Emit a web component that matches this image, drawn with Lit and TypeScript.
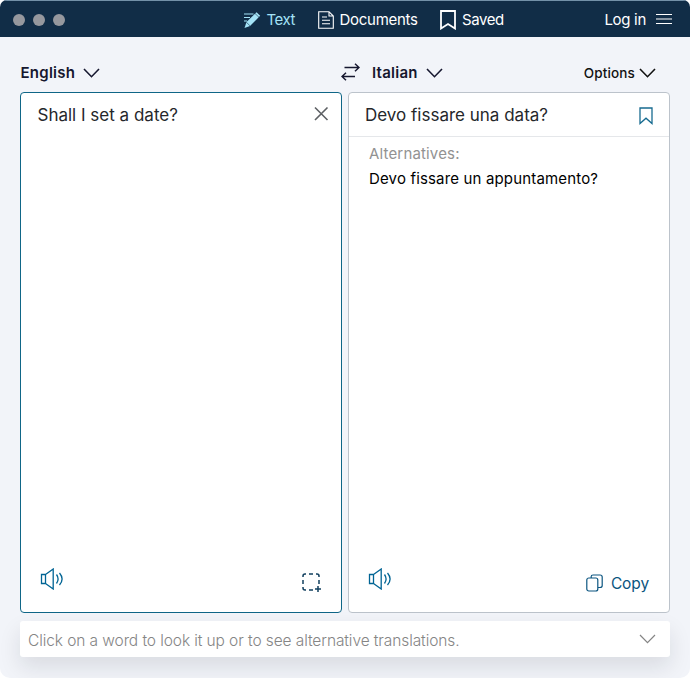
import { LitElement, html, css, svg } from "lit";
import { customElement } from "lit/decorators.js";

const icon = (w: number, h: number, body: unknown, sw = 1.3) => html`<svg
  width=${w} height=${h} viewBox="0 0 ${w} ${h}" fill="none" stroke="currentColor" stroke-width=${sw}>${body}</svg>`;

const chevron = () => icon(17, 10, svg`<path d="M1 1L8.5 8.7L16 1"/>`, 1.6);
const speaker = () => icon(24, 22, svg`<path d="M1.5 6.5H5.5V15.5H1.5ZM5.5 6.5L13.2 1V21L5.5 15.5"/><path d="M16.5 6.5Q19.7 11 16.5 15.5M19.5 5Q24.7 11 19.5 17"/>`, 1.3);

@customElement("app-root")
export class AppRoot extends LitElement {
  static styles = css`
    :host { display: block; font-family: Inter, "Liberation Sans", sans-serif; background: #fff; }
    * { box-sizing: border-box; }
    svg { display: block; flex: none; }
    .window { width: 690px; height: 678px; border-radius: 7px 7px 10px 10px; overflow: hidden; background: #f2f4f9; display: flex; flex-direction: column; }
    .bar { height: 37px; flex: none; background: #112d47; border-top: 1px solid #7391a8; color: #fff; display: flex; align-items: center; padding: 1px 18px 0 13px; font-size: 15px; letter-spacing: -.3px; line-height: 20px; }
    .dots { display: flex; gap: 8px; width: 230px; }
    .dot { width: 12px; height: 12px; border-radius: 50%; background: #96989e; }
    .item { display: flex; align-items: center; white-space: nowrap; }
    .text { color: #a4e3f7; width: 74.6px; gap: 5.6px; letter-spacing: -.5px; }
    .docs { width: 122.4px; gap: 6px; }
    .saved { gap: 6px; letter-spacing: -.4px; }
    .login { margin-left: auto; gap: 10px; }
    .login svg { margin-bottom: 2px; }
    .langs { height: 55px; flex: none; padding: 16px 34px 0 20.5px; display: flex; align-items: center; color: #16172f; font-size: 15px; letter-spacing: .25px; font-weight: 600; }
    .lang { display: flex; align-items: center; gap: 7.5px; }
    .source { width: 320px; }
    .swap { margin-bottom: 2px; }
    .target { margin-left: 12.5px; gap: 8px; }
    .options { margin-left: auto; font-size: 13.5px; font-weight: 500; gap: 4px; color: #111; letter-spacing: .15px; }
    .panes { height: 521px; flex: none; margin: 0 20px; display: grid; grid-template-columns: 322px 322px; gap: 6px; }
    .pane { background: #fff; border: 1px solid #bcc3cb; border-radius: 4px; display: flex; flex-direction: column; color: #006494; }
    .pane.active { border-color: #0f6687; }
    .line { height: 44px; flex: none; display: flex; align-items: center; justify-content: space-between; padding: 0 12px 0 16.5px; font-size: 17px; color: #25272b; white-space: nowrap; }
    .line.result { border-bottom: 1px solid #e5e7ea; padding-right: 16px; padding-left: 16px; }
    .bookmark { color: #176b90; padding-top: 2px; }
    .close { color: #5d6064; padding-bottom: 3px; }
    .alts { padding: 4px 20px; font-size: 15px; letter-spacing: .16px; line-height: 25px; color: #000; }
    .hint { color: #929292; }
    .tools { margin-top: auto; height: 44px; padding: 0 20px 0 19px; display: flex; justify-content: space-between; }
    .scan { margin: 5px -1px 0 0; color: #12405f; }
    .copy { display: flex; align-items: center; gap: 8px; height: 22px; margin-top: 4px; font-size: 15.5px; letter-spacing: -.1px; color: #0b5580; }
    .lookup { margin: 8px 20px 0; height: 36px; flex: none; border-radius: 3px; background: #fff; box-shadow: 0 10px 22px rgba(20, 25, 35, .11); display: flex; align-items: center; justify-content: space-between; padding: 2px 14px 0 8px; font-size: 15.5px; letter-spacing: -.09px; font-weight: 300; color: #858585; }
    .lookup svg { margin-bottom: 2px; }
  `;

  render() {
    return html`<div class="window">
      <header class="bar">
        <div class="dots"><i class="dot"></i><i class="dot"></i><i class="dot"></i></div>
        <div class="item text">${icon(18, 18, svg`<path d="M1 3H10.5M1 6.5H7M1 10H4" stroke-width="1.2"/><path d="M3.5 11L13.5 1.3L17.2 4.8L7 15L1.5 17Z" fill="currentColor" stroke="none"/><path d="M12 2.5L16 6.3M3.3 11.2L7 14.8" stroke="#112d47" stroke-width=".6"/>`)}<span>Text</span></div>
        <div class="item docs">${icon(16, 18, svg`<path d="M.7 .7H11L15.3 5V17.3H.7ZM11 .7V5H15.3M4 6H9M4 9.3H12M4 12.7H12"/>`, 1.1)}<span>Documents</span></div>
        <div class="item saved">${icon(16, 20, svg`<path d="M1 1H15V18.5L8 14L1 18.5Z"/>`, 1.8)}<span>Saved</span></div>
        <div class="item login"><span>Log in</span>${icon(16, 12, svg`<path d="M0 1.5H16M0 6H16M0 10.5H16"/>`, 1.1)}</div>
      </header>
      <div class="langs">
        <div class="lang source"><span>English</span>${chevron()}</div>
        <span class="swap">${icon(19, 18, svg`<path d="M3.5 4.5H18M14 .8L18 4.5L14 8.2M14 13.5H1M5 9.8L1 13.5L5 17.2"/>`, 1.5)}</span>
        <div class="lang target"><span>Italian</span>${chevron()}</div>
        <div class="lang options"><span>Options</span>${chevron()}</div>
      </div>
      <main class="panes">
        <section class="pane active">
          <div class="line"><span>Shall I set a date?</span><span class="close">${icon(16, 16, svg`<path d="M2 1.5L14.5 14M14.5 1.5L2 14"/>`, 1.6)}</span></div>
          <div class="tools">${speaker()}<span class="scan">${icon(20, 20, svg`<path d="M1 4V3Q1 1 3 1H4M7 1H11M14 1H15Q17 1 17 3V4M17 7V11M1 7V11M1 14V15Q1 17 3 17H4M7 17H11M16 13V19M13 16H19"/>`, 1.5)}</span></div>
        </section>
        <section class="pane">
          <div class="line result"><span>Devo fissare una data?</span><span class="bookmark">${icon(14, 18, svg`<path d="M1 1H13V16.5L7 11.2L1 16.5Z"/>`, 1.3)}</span></div>
          <div class="alts"><div class="hint">Alternatives:</div><div>Devo fissare un appuntamento?</div></div>
          <div class="tools">${speaker()}<span class="copy">${icon(17, 18, svg`<rect x=".8" y="4" width="11" height="13" rx="2"/><path d="M5.2 4V2.5Q5.2 1 7 1H14Q16.2 1 16.2 3V11.5Q16.2 13.5 14 13.5H12"/>`, 1.2)}<span>Copy</span></span></div>
        </section>
      </main>
      <footer class="lookup"><span>Click on a word to look it up or to see alternative translations.</span>${icon(17, 10, svg`<path d="M1 1L8.5 8.7L16 1"/>`, 1.2)}</footer>
    </div>`;
  }
}
